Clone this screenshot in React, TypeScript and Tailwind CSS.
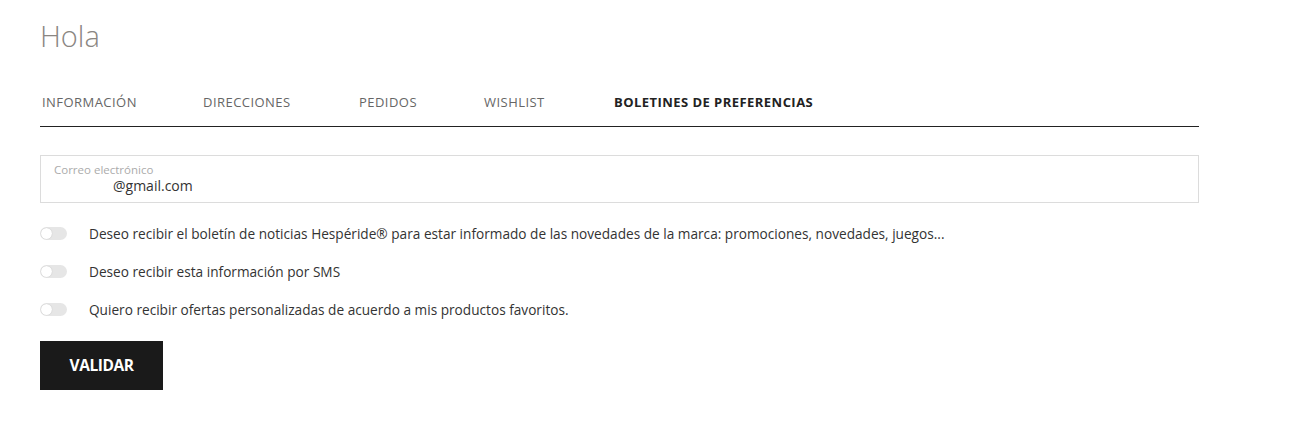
import React, { useState } from 'react';

const tabs = ['INFORMACIÓN', 'DIRECCIONES', 'PEDIDOS', 'WISHLIST', 'BOLETINES DE PREFERENCIAS'];
const tabPos = ['w-[161px]', 'w-[156px]', 'w-[125px]', 'w-[130px]', ''];

const options = [
  'Deseo recibir el boletín de noticias Hespéride® para estar informado de las novedades de la marca: promociones, novedades, juegos...',
  'Deseo recibir esta información por SMS',
  'Quiero recibir ofertas personalizadas de acuerdo a mis productos favoritos.',
];

const Toggle: React.FC<{ on: boolean; onClick: () => void }> = ({ on, onClick }) => (
  <button
    onClick={onClick}
    className={`relative h-[13px] w-[27px] rounded-full shrink-0 ${on ? 'bg-[#1a1a1a]' : 'bg-[#e6e6e6]'}`}
  >
    <span
      className={`absolute top-[1px] h-[11px] w-[11px] rounded-full bg-white shadow-[0_0_1px_rgba(0,0,0,0.25)] ${on ? 'left-[15px]' : 'left-[1px]'}`}
    />
  </button>
);

const App: React.FC = () => {
  const [checks, setChecks] = useState([false, false, false]);

  return (
    <div className="min-h-screen bg-white pl-10 pt-[19px] font-['Open_Sans',sans-serif]">
      <div className="w-[1159px]">
        <h1 className="text-[29px] leading-[34px] font-light text-[#8a8682]">Hola</h1>

        <div className="mt-[40px] flex border-b-[1.5px] border-[#222] pb-[15px] pl-[2px]">
          {tabs.map((t, i) => (
            <div
              key={t}
              className={`${tabPos[i]} text-[13px] leading-[18px] tracking-[0.035em] ${i === 4 ? 'font-bold text-[#222]' : 'text-[#666]'}`}
            >
              {t}
            </div>
          ))}
        </div>

        <div className="mt-[28px] h-[48px] border border-[#dcdcdc] pl-[13px] pt-[7px]">
          <div className="text-[11.5px] leading-[14px] text-[#ababab]">Correo electrónico</div>
          <div className="pl-[59px] text-[14px] leading-[18px] text-[#333]">@gmail.com</div>
        </div>

        <div className="mt-[21px] flex flex-col gap-[19px]">
          {options.map((o, i) => (
            <div key={i} className="flex items-center gap-[22px] h-[19px]">
              <Toggle on={checks[i]} onClick={() => setChecks(checks.map((c, j) => (j === i ? !c : c)))} />
              <span className="text-[13.65px] leading-[19px] text-[#333]">{o}</span>
            </div>
          ))}
        </div>

        <button className="mt-[22px] h-[49px] w-[123px] bg-[#1a1a1a] text-white text-[15.5px] font-bold tracking-[-0.03em]">
          VALIDAR
        </button>
      </div>
    </div>
  );
};

export default App;
